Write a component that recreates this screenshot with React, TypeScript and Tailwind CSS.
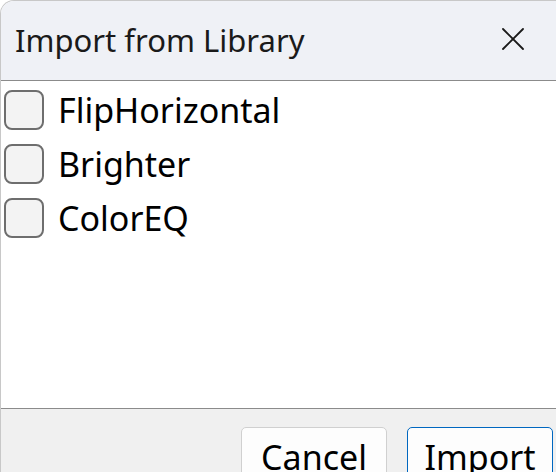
import { X } from 'lucide-react'

const items = ['FlipHorizontal', 'Brighter', 'ColorEQ']

function Checkbox({ label }: { label: string }) {
  return (
    <label className="flex h-[54px] items-center gap-[14px]">
      <span className="h-[40px] w-[40px] shrink-0 rounded-[8px] border-2 border-[#6e6e6e] bg-[#f3f3f3]" />
      <span className="text-[34px] leading-none text-black">{label}</span>
    </label>
  )
}

export default function App() {
  return (
    <div
      className="flex h-[472px] w-[556px] flex-col overflow-hidden rounded-tl-[14px] border-l border-t border-[#c8c8c8] bg-white"
      style={{ fontFamily: '"Noto Sans", "Open Sans", sans-serif' }}
    >
      <div className="flex h-[80px] shrink-0 items-center justify-between border-b border-[#8b8b8b] bg-[#eff1f6] pl-[14px] pr-[23px]">
        <h1 className="text-[31px] font-normal text-[#1a1a1a]">Import from Library</h1>
        <button className="mb-[4px] text-[#1a1a1a]">
          <X size={40} strokeWidth={1.1} />
        </button>
      </div>

      <div className="flex flex-1 flex-col pl-[3px] pt-[2px]">
        {items.map((name) => (
          <Checkbox key={name} label={name} />
        ))}
      </div>

      <div className="flex h-[64px] shrink-0 justify-end gap-[20px] border-t border-[#8b8b8b] bg-[#f0f0f0] pr-[3px] pt-[18px]">
        <button className="h-[60px] w-[146px] rounded-[5px] border border-[#d0d0d0] bg-[#fdfdfd] text-[34px] text-black">
          Cancel
        </button>
        <button className="h-[60px] w-[146px] rounded-[5px] border border-[#0067c0] bg-[#fdfdfd] text-[34px] text-black">
          Import
        </button>
      </div>
    </div>
  )
}
